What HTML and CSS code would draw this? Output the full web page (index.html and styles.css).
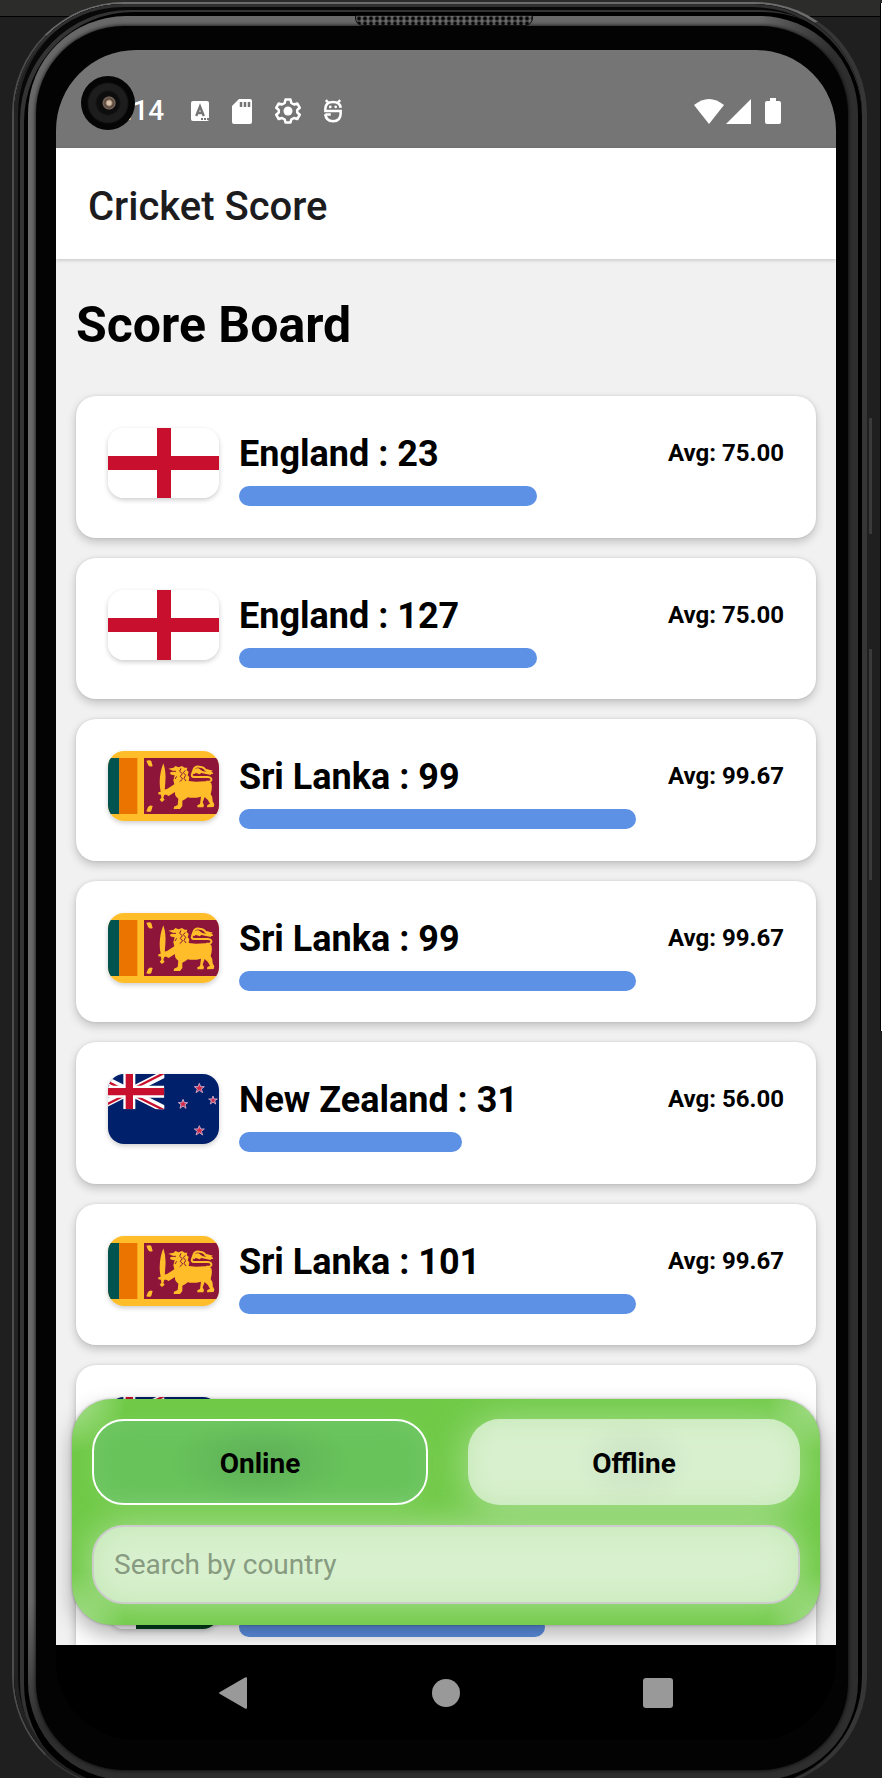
FILE: index.html
```html
<!DOCTYPE html>
<html lang="en">
<head>
<meta charset="utf-8">
<meta name="viewport" content="width=device-width, initial-scale=1">
<title>Cricket Score</title>
<link rel="stylesheet" href="styles.css">
</head>
<body>
<svg class="defs" aria-hidden="true">
  <symbol id="england" viewBox="0 0 111 70" preserveAspectRatio="none">
    <path fill="#fff" d="M0 0h111v70H0z"/><path fill="#c8102e" d="M49 0h14v70H49zM0 28h111v14H0z"/>
  </symbol>
  <symbol id="srilanka" viewBox="24 30 333 210" preserveAspectRatio="none">
    <path fill="#ffbe29" d="M24 30h333v210H24z"/>
    <path fill="#00534e" d="M24 51h34v168H24z"/><path fill="#eb7400" d="M58 51h54v168H58z"/>
    <path fill="#8d153a" d="M132 51h225v168H132z"/>
    <g fill="#ffbe29">
      <path d="M139 59q13-4 15 2l4 14q-9 5-14-4zM139 211q13 4 15-2l4-14q-9-5-14 4z"/>
      <path d="M190 67q9 26 6 56l-2 28 8 2v6l-9 2-3 10 4 5-8 7-7-7 5-6-1-9-8-1v-6l7-2q-6-28 0-58 3-14 8-27z"/>
      <path d="M205 83l16-3 5-5 10 4 10-4 8 5 8 0-2 7 6 6-3 10 5 6-2 11 22 2 26-1q16 0 20 6 4 14-2 32 8 10 6 22l5 9-2 8-20 1 1-7 8-4q-6-13-16-20l-6 16 4 9-2 6-18 0 0-6 8-4 3-22q-22 6-40 2-8 8-16 10l0 16-7 9-19 0 1-7 11-5 2-19q-12-8-10-20l-19 12-10-5-5 3-5-8 5-9 10-2 22-14-3-12 4-15q-6 0-14-4l2-6 8-2-8-5z"/>
      <path fill="none" stroke="#ffbe29" stroke-width="6" d="M318 122h10q9-3 5-10-3-5-13-4h-38q-9-1-6-9l5-14q4-11 18-8 14 1 18 11 13 2 20 10M280 98q13-14 29-4l24 5"/>
      <path d="M278 92q6-13 18-10l13 10-10 8zM319 84l20 5-6 3 7 7-22 0z"/>
    </g>
    <g fill="none" stroke="#8d153a" stroke-width="3"><path d="M214 91l14 0M243 82l-4 9 8 7-6 8 7 8-9 8M256 88l-6 7 7 8-5 9 6 8M230 106l-5 8"/></g>
  </symbol>
  <symbol id="newzealand" viewBox="144 132 333 210" preserveAspectRatio="none">
    <path fill="#00206b" d="M144 132h333v210H144z"/>
    <svg x="103" y="132" width="210" height="106" viewBox="0 0 210 106">
      <path stroke="#fff" stroke-width="22" d="M0 0l210 106M0 106L210 0"/>
      <path stroke="#c8102e" stroke-width="7" d="M0 3l105 53M105 50L210-3M0 110l105-53M105 56l105 53"/>
      <path fill="#fff" d="M87 0h36v106H87zM0 35h210v36H0z"/>
      <path fill="#c8102e" d="M94 0h22v106H94zM0 42h210v22H0z"/>
    </svg>
    <g fill="#d52b4b" stroke="#c9a5c4" stroke-width="3">
      <path d="M418 160l4 10h11l-9 7 4 11-10-7-10 7 4-11-9-7h11z"/>
      <path d="M418 287l4 10h11l-9 7 4 11-10-7-10 7 4-11-9-7h11z"/>
      <path d="M369 208l4 10h10l-8 6 3 11-9-7-9 7 3-11-8-6h10z"/>
      <path d="M459 198l3 9h10l-8 5 3 10-8-6-8 6 3-10-8-5h10z"/>
    </g>
  </symbol>
  <symbol id="pakistan" viewBox="0 0 111 70" preserveAspectRatio="none">
    <path fill="#fff" d="M0 0h111v70H0z"/><path fill="#01411c" d="M28 0h83v70H28z"/>
  </symbol>
</svg>

<div class="phone">
  <span class="side-key power"></span>
  <span class="side-key volume"></span>
  <div class="rim"><div class="bezel"><span class="speaker"></span><div class="glass">
    <div class="screen">
      <span class="camera"></span>

      <div class="status-bar">
        <span class="clock">:14</span>
        <div class="notices">
          <svg width="18" height="20" viewBox="0 0 18 20"><rect width="18" height="20" rx="2" fill="#fff"/><path fill="none" stroke="#757575" stroke-width="2.400" d="M5.200 15L9 5.500l3.800 9.500M6.500 12h5"/><path stroke="#757575" stroke-width="2" stroke-dasharray="2 1" d="M10 18h8"/></svg>
          <svg width="20" height="25" viewBox="0 0 20 25"><path fill="#fff" d="M7 0h11q2 0 2 2v21q0 2-2 2H2q-2 0-2-2V7z"/><path stroke="#757575" stroke-width="2.500" d="M9 3v5M13 3v5M17 3v5"/></svg>
          <svg width="26" height="26" viewBox="0 0 26 26"><path fill="none" stroke="#fff" stroke-width="2.500" stroke-linejoin="round" d="M10.500 1.500h5l.8 3.500 2.700 1.500 3.300-1 2.500 4.300L22.200 12v2.500l2.600 2.200-2.500 4.300-3.300-1-2.700 1.500-.8 3h-5l-.8-3L7 20l-3.300 1-2.500-4.300L3.800 14.500V12L1.200 9.800l2.500-4.300 3.300 1L9.700 5z"/><circle cx="13" cy="13" r="4.500" fill="#fff"/></svg>
          <svg width="18" height="26" viewBox="0 0 20 26"><path fill="none" stroke="#fff" stroke-width="2.800" d="M2 1l3 3M18 1l-3 3M18.500 9.500q-.5-6.500-8.500-6.500T1.500 10v3h17v3q0 8-8.500 8.500-8-.5-8.500-8V17h6"/><circle cx="7" cy="8.500" r="1.500" fill="#fff"/><circle cx="13" cy="8.500" r="1.500" fill="#fff"/></svg>
        </div>
        <div class="signals">
          <svg width="30" height="25" viewBox="0 0 30 25"><path fill="#fff" d="M0 6q15-12 30 0L15 25z"/></svg>
          <svg width="25" height="25" viewBox="0 0 25 25"><path fill="#fff" d="M25 0v25H0z"/></svg>
          <svg class="battery" width="16" height="26" viewBox="0 0 16 26"><path fill="#fff" d="M5 0h6v3h3q2 0 2 2v19q0 2-2 2H2q-2 0-2-2V5q0-2 2-2h3z"/></svg>
        </div>
      </div>

      <header class="app-bar">Cricket Score</header>

      <main class="content">
        <h1 class="heading">Score Board</h1>
        <ul class="scores">
          <li class="card"><svg class="flag"><use href="#england"/></svg><div class="info"><h2 class="team">England : 23</h2><div class="bar" style="width:75%"></div></div><p class="average">Avg: 75.00</p></li>
          <li class="card"><svg class="flag"><use href="#england"/></svg><div class="info"><h2 class="team">England : 127</h2><div class="bar" style="width:75%"></div></div><p class="average">Avg: 75.00</p></li>
          <li class="card"><svg class="flag"><use href="#srilanka"/></svg><div class="info"><h2 class="team">Sri Lanka : 99</h2><div class="bar" style="width:99.67%"></div></div><p class="average">Avg: 99.67</p></li>
          <li class="card"><svg class="flag"><use href="#srilanka"/></svg><div class="info"><h2 class="team">Sri Lanka : 99</h2><div class="bar" style="width:99.67%"></div></div><p class="average">Avg: 99.67</p></li>
          <li class="card"><svg class="flag"><use href="#newzealand"/></svg><div class="info"><h2 class="team">New Zealand : 31</h2><div class="bar" style="width:56%"></div></div><p class="average">Avg: 56.00</p></li>
          <li class="card"><svg class="flag"><use href="#srilanka"/></svg><div class="info"><h2 class="team">Sri Lanka : 101</h2><div class="bar" style="width:99.67%"></div></div><p class="average">Avg: 99.67</p></li>
          <li class="card"><svg class="flag"><use href="#newzealand"/></svg><div class="info"><div class="team"></div><div class="bar" style="width:56%"></div></div><div class="average"></div></li>
          <li class="card"><svg class="flag"><use href="#pakistan"/></svg><div class="info"><div class="team"></div><div class="bar" style="width:77%"></div></div><div class="average"></div></li>
        </ul>

        <form class="panel">
          <div class="modes">
            <button type="button" class="mode selected" aria-pressed="true">Online</button>
            <button type="button" class="mode" aria-pressed="false">Offline</button>
          </div>
          <input class="search" type="text" aria-label="Search by country" placeholder="Search by country">
        </form>
      </main>

      <nav class="nav-bar">
        <button type="button" class="nav-key" aria-label="Back"><svg width="30" height="32" viewBox="0 0 30 32"><path fill="#999" d="M26 .5q2-1 2 1v29q0 2-2 1L1 17q-2-1 0-2z"/></svg></button>
        <button type="button" class="nav-key" aria-label="Home"><svg width="30" height="32" viewBox="0 0 30 32"><circle cx="15" cy="16" r="14" fill="#999"/></svg></button>
        <button type="button" class="nav-key" aria-label="Recent apps"><svg width="30" height="32" viewBox="0 0 30 32"><rect y="1" width="30" height="30" rx="3" fill="#999"/></svg></button>
      </nav>
    </div>
  </div></div></div>
</div>
</body>
</html>
```
FILE: styles.css
```css
* { box-sizing: border-box; }

html { background: #1f1f1f; }

body {
  margin: 0;
  height: 100vh;
  overflow: hidden;
  padding: 2px 15px 0 12px;
  font-family: Roboto, "Liberation Sans", sans-serif;
  background:
    linear-gradient(#fff, #fff) right 3px / 1px 1028px no-repeat,
    linear-gradient(#000, #000) right 3px / 2px 1028px no-repeat,
    linear-gradient(#2c2c2a 16px, #000 16px, #000 17px, #1f1f1f 17px);
  background-origin: border-box;
}

h1, h2, p, ul { margin: 0; padding: 0; }

.defs { position: absolute; width: 0; height: 0; }

/* Device shell; its lower edge runs just past the window */
.phone {
  position: relative;
  height: calc(100vh + 8px);
  border-style: solid;
  border-width: 2px 5px 2px 2px;
  border-color: #6c6c6c #363636 #333 #4c4c4c;
  border-radius: 112px;
  background: #2c2c2c;
}

.rim {
  height: 100%;
  padding: 12px 4px 6px 14px;
  border-radius: 110px;
  background: #000;
  box-shadow: inset 0 3px 0 #303030, inset 4px 0 0 #222, inset 6px 6px 0 #080808, inset 10px 8px 0 #333;
}

.bezel {
  position: relative;
  height: 100%;
  padding: 10px 10px 10px 8px;
  border-radius: 98px;
  background:
    linear-gradient(to right, transparent 88%, #2e2e2e 97%),
    linear-gradient(#686868 90%, #2e2e2e 97%);
}

.glass {
  height: 100%;
  padding: 24px 12px 30px 20px;
  border-radius: 88px;
  background: #030303;
  box-shadow: 0 0 4px #000;
}

.speaker {
  position: absolute;
  top: -1px;
  left: 50%;
  width: 178px;
  height: 11px;
  margin-left: -88px;
  border: 1px solid #111;
  border-radius: 2px 2px 8px 8px;
  background: radial-gradient(circle, #050505 1px, #6c6c6c 3px) 0 0 / 6px 5px #111;
}

.side-key {
  position: absolute;
  right: -10px;
  width: 3px;
  background: #3a3a3a;
}
.power { top: 414px; height: 116px; }
.volume { top: 645px; height: 231px; }

.screen {
  position: relative;
  height: 100%;
  display: flex;
  flex-direction: column;
  overflow: hidden;
  border-radius: 80px;
  background: #000;
}

.camera {
  position: absolute;
  z-index: 2;
  top: 26px;
  left: 25px;
  width: 54px;
  height: 54px;
  border-radius: 50%;
  background:
    radial-gradient(circle at 52% 50%, #d8c0a8 0 2px, #554338 4px, #79685d 6px, transparent 7px),
    radial-gradient(circle, #0d0d0d 0 11px, #1d1d1d 13px 19px, #050505 21px);
}

/* Status bar */
.status-bar {
  flex: none;
  height: 98px;
  padding: 24px 55px 0 69px;
  display: flex;
  align-items: center;
  color: #fff;
  background: #757575;
}
.clock { font-size: 28px; line-height: 32px; font-weight: 500; }
.notices { display: flex; align-items: center; gap: 23px; margin-left: 27px; }
.signals { display: flex; align-items: center; gap: 2px; margin-left: auto; }
.battery { margin-left: 12px; }

.app-bar {
  flex: none;
  position: relative;
  z-index: 1;
  padding: 35px 32px 28px;
  font-size: 40px;
  line-height: 48px;
  font-weight: 500;
  color: #1c1c1e;
  background: #fff;
  box-shadow: 0 1px 4px rgba(0, 0, 0, .2);
}

/* Score list */
.content {
  position: relative;
  flex: 1;
  min-height: 0;
  overflow: hidden;
  padding: 36px 20px 0;
  background: #f1f1f1;
}
.heading {
  margin-bottom: 41px;
  font-size: 50px;
  line-height: 60px;
  font-weight: 700;
  color: #000;
}
.scores {
  display: grid;
  grid-auto-rows: 1fr;
  row-gap: 20px;
  min-height: 1272px;
  list-style: none;
}
.card {
  display: flex;
  padding: 32px 32px 28px;
  border-radius: 20px;
  background: #fff;
  box-shadow: 0 4px 10px rgba(0, 0, 0, .2), 0 0 3px rgba(0, 0, 0, .1);
}
.flag {
  flex: none;
  width: 111px;
  height: 70px;
  margin-right: 20px;
  border-radius: 16px;
  box-shadow: 0 2px 5px rgba(0, 0, 0, .2);
}
.info { flex: 73; min-width: 0; }
.team {
  min-height: 52px;
  margin-bottom: 6px;
  font-size: 36px;
  line-height: 52px;
  font-weight: 700;
  white-space: nowrap;
}
.bar { height: 20px; border-radius: 10px; background: #5d91e5; }
.average {
  flex: 27;
  font-size: 24px;
  line-height: 50px;
  font-weight: 700;
  text-align: right;
  white-space: nowrap;
}

/* Floating filter panel */
.panel {
  position: absolute;
  right: 16px;
  bottom: 20px;
  left: 16px;
  padding: 20px 20px 21px;
  border-radius: 40px;
  overflow: hidden;
  background:
    radial-gradient(circle at 0 0, rgba(255, 255, 255, .4), transparent 54px),
    radial-gradient(circle at 100% 0, rgba(255, 255, 255, .4), transparent 54px),
    radial-gradient(circle at 0 100%, rgba(255, 255, 255, .4), transparent 54px),
    radial-gradient(circle at 100% 100%, rgba(255, 255, 255, .4), transparent 54px),
    #70ca47;
  box-shadow: 0 10px 22px rgba(0, 0, 0, .3), 0 0 3px rgba(0, 0, 0, .3);
}
.modes { display: flex; gap: 40px; margin-bottom: 20px; }
.mode {
  flex: 1;
  height: 86px;
  padding: 4px 0 0;
  border: 0;
  border-radius: 32px;
  font-family: inherit;
  font-size: 28px;
  line-height: 32px;
  font-weight: 700;
  color: #000;
  background: radial-gradient(ellipse 60px 48px at center, #cde3c5, #d8f0ce);
  box-shadow: inset 0 0 24px #c4e8b5, 0 4px 40px rgba(216, 240, 206, .6);
}
.mode.selected {
  border: 2px solid #fff;
  background: radial-gradient(ellipse 90px 48px at center, #5fb058, #68c35b);
  box-shadow: inset 0 0 26px #74c967, 0 4px 20px rgba(216, 240, 206, .1);
}
.search {
  display: block;
  position: relative;
  width: 100%;
  height: 79px;
  padding: 0 20px;
  border: 2px solid #ccc;
  border-radius: 32px;
  font-family: inherit;
  font-size: 28px;
  line-height: 32px;
  color: #000;
  background: #d8f0ce;
  box-shadow: inset 0 0 32px #c4e8b5, 0 0 36px rgba(216, 240, 206, .6);
}
.search::placeholder { color: #879b80; opacity: 1; }

/* System navigation */
.nav-bar {
  flex: none;
  height: 95px;
  display: flex;
  align-items: center;
  justify-content: center;
  gap: 182px;
  background: #000;
}
.nav-key { padding: 0; border: 0; background: none; }
.nav-key svg { display: block; }
```
